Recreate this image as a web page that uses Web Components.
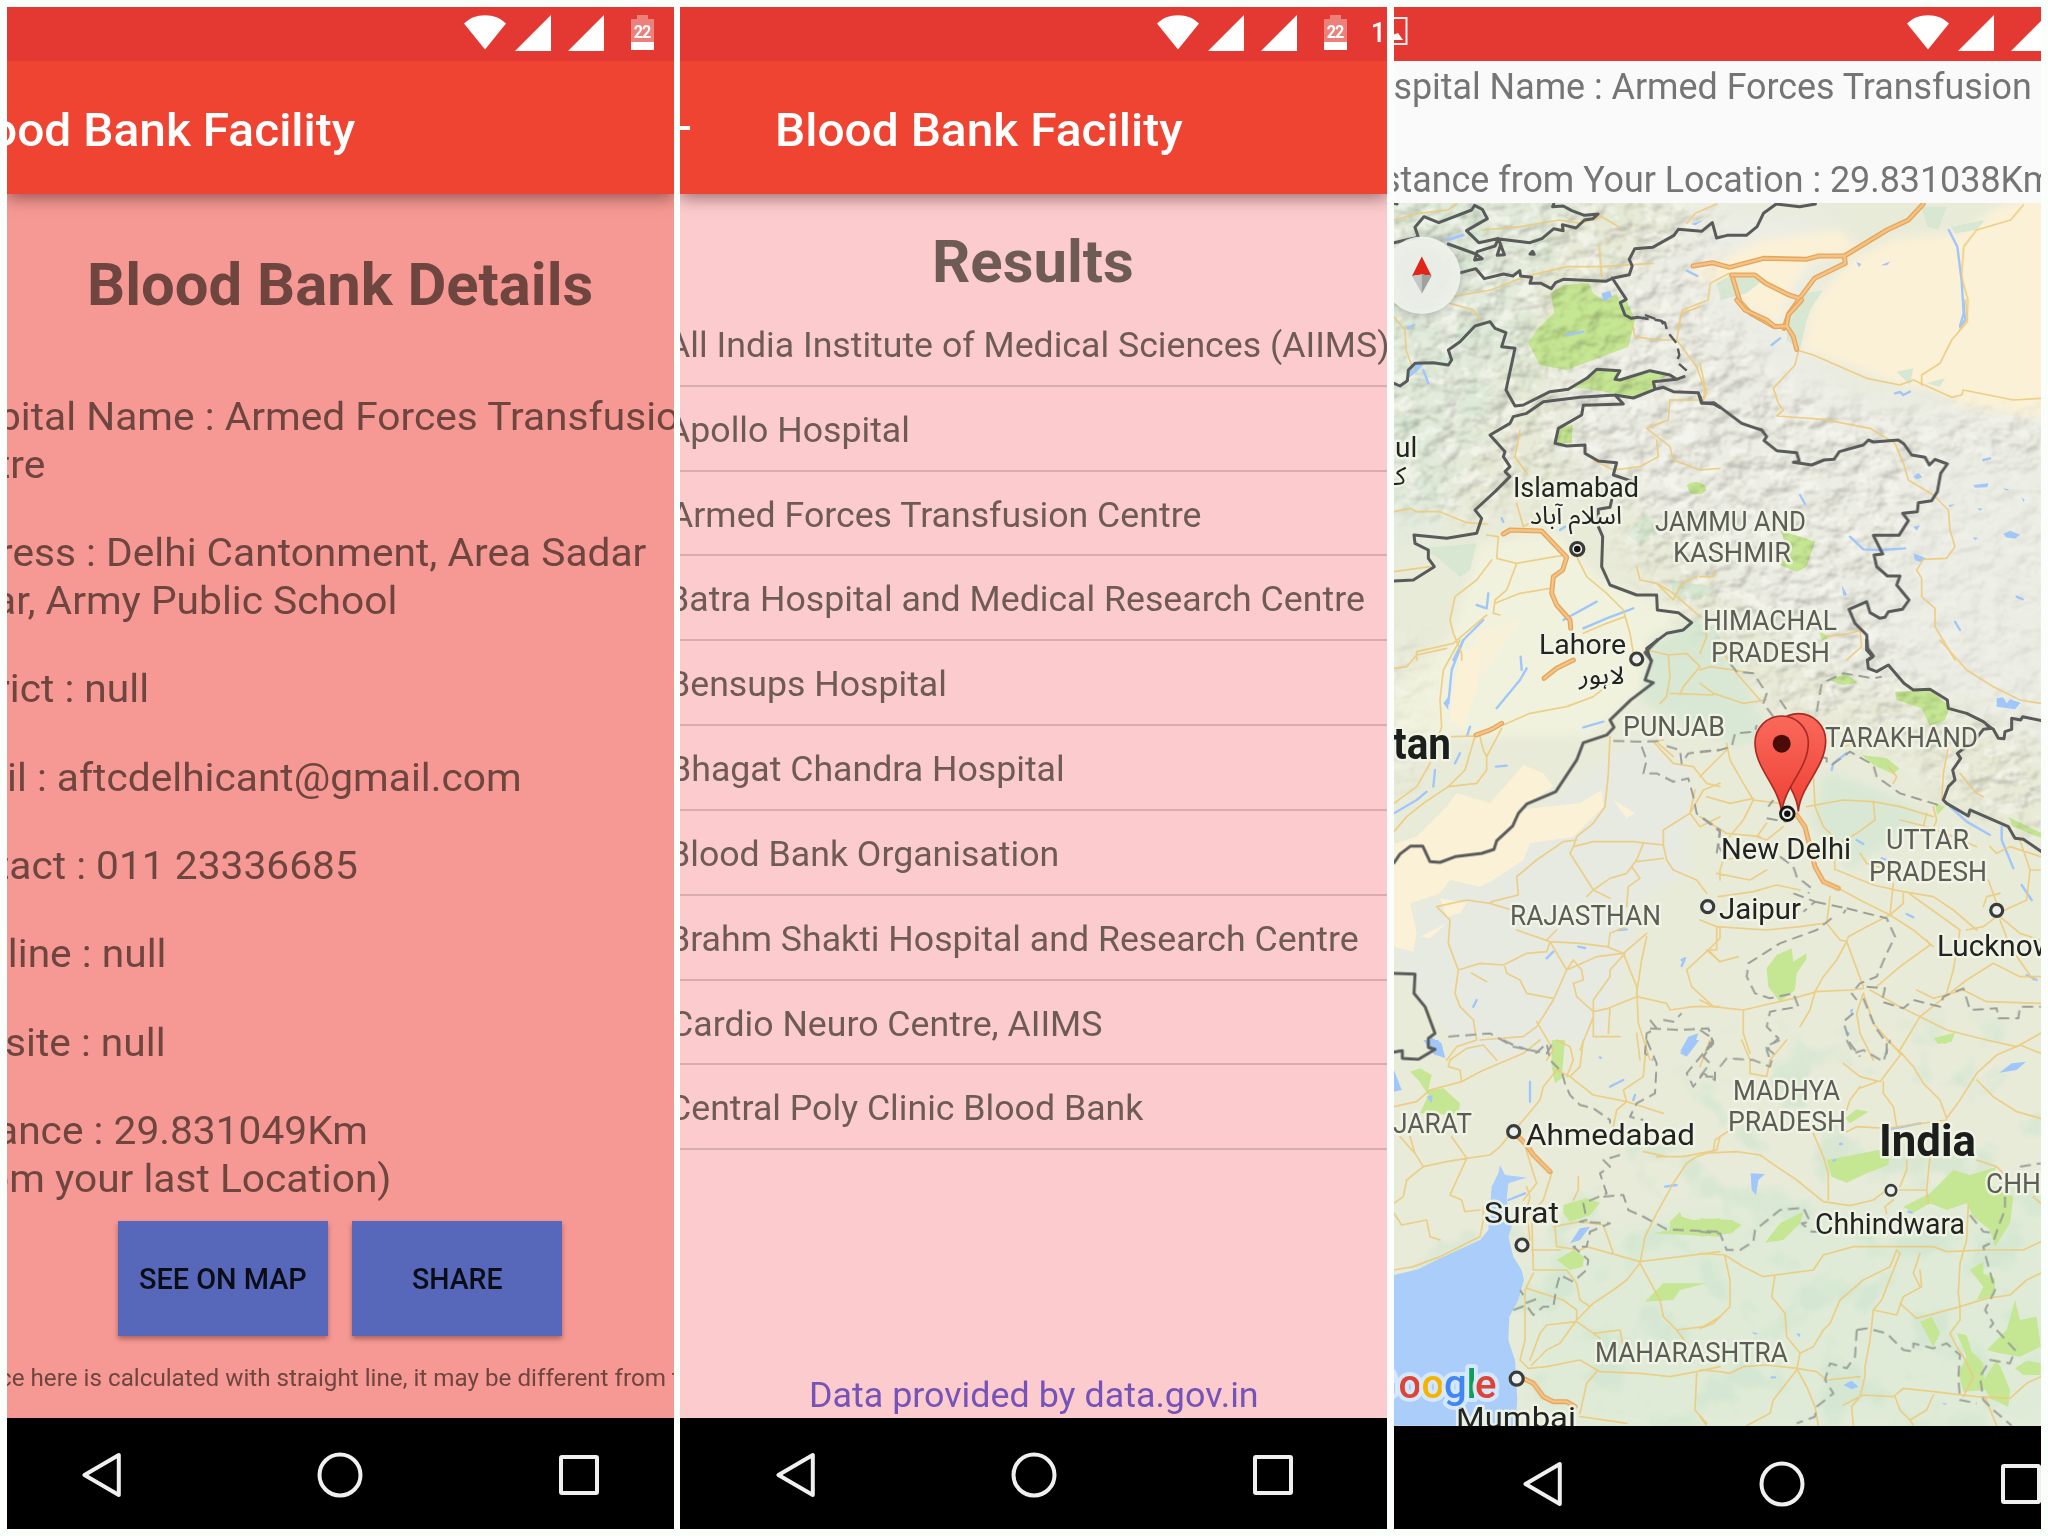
<!DOCTYPE html>
<html lang="en">
<head>
<meta charset="utf-8">
<title>Blood Bank Facility</title>
<style>
html,body{margin:0;height:100%;background:#fafffc;overflow:hidden}
body{font-family:Roboto,"Noto Sans",sans-serif;font-kerning:normal}
</style>
</head>
<body>
<screen-collage></screen-collage>

<template id="map-tpl">
<style>
:host{display:block;overflow:hidden;min-height:0}
svg{display:block;width:647px;height:1223px}
.n *{vector-effect:non-scaling-stroke}
.b path,.s path,.r path,.h path,.wl path{fill:none;stroke-linejoin:round;stroke-linecap:round}
.b path{stroke:#585b5a;stroke-width:3}
.s path{stroke:#9b9f98;stroke-width:2;stroke-dasharray:11 6;stroke-linecap:butt}
.r path{stroke:#ecca7c;stroke-width:1.7}
.h path{stroke:#e3a65c;stroke-width:5}
.h path+path{stroke:#f7c283;stroke-width:2.4}
.g path{fill:#c5e693}
.w path{fill:#a1c6fa}
.wl path{stroke:#a1c6fa;stroke-width:2.4}
.d path{fill:#fbf1d7}
.e path{fill:#d7e7d2}
text{font-family:Roboto,"Noto Sans Arabic","DejaVu Sans",sans-serif;paint-order:stroke;stroke:#f1f4e6;stroke-width:5px;stroke-opacity:.85;stroke-linejoin:round}
.city text{font-size:30px;fill:#222422}
.st text{font-size:28px;fill:#5c5e56}
.co text{font-size:45px;font-weight:700;fill:#1c1e1c}
.goo text{font:500 40px Roboto,sans-serif;stroke:#dcebfb;stroke-width:8px}
.dot circle{fill:#eef0ee;stroke:#3a3c3a;stroke-width:3.2}
</style>
<svg viewBox="1394 203 647 1223">
<defs>
<filter id="relief" x="0" y="0" width="100%" height="100%" color-interpolation-filters="sRGB">
<feTurbulence type="fractalNoise" baseFrequency=".042 .06" numOctaves="4" seed="11"/>
<feDiffuseLighting surfaceScale="7" diffuseConstant="1.16" lighting-color="#fffcf0"><feDistantLight azimuth="225" elevation="60"/></feDiffuseLighting>
<feGaussianBlur stdDeviation=".9"/>
</filter>
<filter id="snow" x="0" y="0" width="100%" height="100%" color-interpolation-filters="sRGB">
<feTurbulence type="fractalNoise" baseFrequency=".05 .07" numOctaves="3" seed="23"/>
<feColorMatrix values="0 0 0 0 .98  0 0 0 0 .98  0 0 0 0 .96  7 0 0 0 -3.6"/>
</filter>
<filter id="patches" x="0" y="0" width="100%" height="100%" color-interpolation-filters="sRGB">
<feTurbulence type="fractalNoise" baseFrequency=".022" numOctaves="3" seed="5"/>
<feColorMatrix values="0 0 0 0 .81  0 0 0 0 .90  0 0 0 0 .81  6 0 0 0 -3.1"/>
</filter>
<filter id="soft" x="-20%" y="-20%" width="140%" height="140%"><feGaussianBlur stdDeviation="16"/></filter>
<filter id="soft2"><feGaussianBlur stdDeviation="5"/></filter>
<linearGradient id="pin" x1="0" y1="0" x2="0" y2="1"><stop offset="0" stop-color="#f9695b"/><stop offset="1" stop-color="#ee4135"/></linearGradient>
<mask id="mtn" maskUnits="userSpaceOnUse" x="1394" y="203" width="647" height="1223">
<g filter="url(#soft)">
<path fill="#fff" d="M1370 190L1680 190 1720 230 1690 290 1740 330 1780 385 1870 415 2070 420 2070 455 1930 450 1900 500 1880 620 1900 660 1960 720 2070 760 2070 850 1960 800 1900 745 1800 720 1730 640 1640 570 1600 480 1520 500 1470 520 1370 500Z"/>
<path fill="#555" d="M1900 480L2070 450 2070 760 1970 700 1900 650Z"/>
<path fill="#777" d="M1370 640L1425 640 1415 790 1370 790Z"/>
</g></mask>
<mask id="plain" maskUnits="userSpaceOnUse" x="1394" y="203" width="647" height="1223">
<path fill="#fff" filter="url(#soft)" d="M1370 1240L1560 1200 1720 1040 2060 1010 2060 1450 1370 1450Z"/>
<path fill="#999" filter="url(#soft)" d="M1370 190L1640 190 1600 300 1560 460 1370 520Z"/></mask>
</defs>
<rect x="1394" y="203" width="647" height="1223" fill="#e9ebd9"/>
<path fill="#ecede5" filter="url(#soft)" d="M1560 330L1700 200 1830 220 1800 330 1850 390 2060 400 2060 760 1960 700 1850 690 1740 600 1630 500 1560 470Z"/>
<path fill="#e2ebdd" filter="url(#soft)" d="M1380 190L1590 190 1540 250 1500 400 1430 540 1380 560Z"/>
<path fill="#f1f2dd" filter="url(#soft2)" d="M1480 545L1555 530 1600 580 1690 615 1650 640 1645 690 1590 735 1394 738 1394 690 1450 640Z"/>
<path fill="#fbf1d7" filter="url(#soft2)" d="M2060 190L2000 205 1965 232 1890 240 1850 262 1815 300 1802 350 1840 362 1900 385 1935 388 1960 405 2060 420Z"/>
<path fill="#fbf1d7" filter="url(#soft2)" d="M1680 280L1760 240 1840 230 1860 250 1810 262 1790 290 1780 325 1745 305 1725 280Z"/>
<path fill="#e7eae1" filter="url(#soft2)" d="M1560 790L1640 740 1690 770 1690 870 1640 900 1600 1040 1470 1060 1394 960 1400 920 1500 860Z"/>
<path fill="#d9e8d4" filter="url(#soft2)" d="M1650 640L1700 620 1750 690 1770 740 1730 745 1660 712 1640 700ZM1825 770L1880 790 1930 815 1850 870 1810 820Z"/>
<path fill="#e0ebd7" filter="url(#soft)" d="M1520 1250L1700 1200 2060 1190 2060 1440 1520 1440Z"/>
<g mask="url(#plain)" opacity=".6"><rect x="1394" y="203" width="647" height="1223" filter="url(#patches)"/></g>
<g class="n d" transform="translate(1380 640) scale(.33333)">
<path d="M42 612L110 590 200 500 230 460 330 490 430 375 490 400 520 440 410 510 600 490 665 450 670 500 580 590 450 610 430 660 340 720 300 740 210 720 180 760 90 790 110 880 100 935 42 920Z"/>
<path d="M240 40L300 20 290 150 250 260 210 240ZM700 480L765 520 740 535ZM120 890L200 850 150 895ZM180 775L260 790 240 820 200 830Z"/></g>
<path fill="#fbf1d7" opacity=".7" d="M1480 630L1520 620 1500 650 1470 690 1450 700Z"/>
<g class="n e" transform="translate(1380 300) scale(.33333)">
<path d="M120 745L290 730 270 810 240 830 170 770ZM850 1040L960 940 1020 1010 1020 1080 830 1080ZM800 640L830 700 780 740 740 700ZM870 840L1000 860 960 900 880 890Z"/></g>
<g class="n e" transform="translate(1700 300) scale(.33333)"><path d="M290 30L340 5 320 60 300 150 260 120 265 70ZM590 215L640 205 630 255ZM680 250L735 235 720 260Z"/></g>
<g class="n e" transform="translate(1380) scale(.42606 .33333)"><path d="M790 850L830 820 900 840 860 880 800 900ZM1270 620L1330 620 1310 690 1285 680ZM1340 680L1420 660 1400 690 1350 700ZM1000 880L1040 870 980 985 950 985Z"/></g>

<g mask="url(#mtn)" opacity=".55"><rect x="1394" y="203" width="647" height="700" filter="url(#snow)"/></g>

<g class="n g" transform="translate(1380) scale(.42606 .33333)"><path d="M400 880L430 855 490 848 500 880 530 905 555 880 570 930 600 990 380 990 410 940Z"/></g>
<g class="n g" transform="translate(1380 300) scale(.33333)">
<path d="M560 0L740 0 765 60 745 140 680 165 560 210 480 195 445 130 470 90Z"/>
<path d="M570 265L620 235 650 208 720 212 705 238 810 212 870 225 830 240 825 270 760 294 700 280 610 265Z"/>
<path d="M530 385L578 375 575 430 530 430ZM920 555Q950 535 978 560 970 590 930 580Z"/></g>
<g class="n g" transform="translate(1700 300) scale(.33333)"><path d="M240 690L345 725 320 800 290 815 240 795 270 760ZM0 545L20 570 0 585ZM355 990L385 1010 370 1030Z"/></g>
<g class="n g" transform="translate(1700 640) scale(.33333)">
<path d="M585 155L690 150 750 200 735 240 690 258 665 205 590 180ZM385 120L440 100 472 128 430 135ZM485 345L560 355 598 385 580 402 520 375ZM705 490L735 500 712 525ZM925 530L1025 580 1025 595 940 560Z"/>
<path d="M200 985L230 945 275 925 280 965 320 940 318 960 290 1000 285 1050 240 1085 205 1040ZM700 1195L765 1178 755 1205 715 1212ZM365 0L380 0 370 8Z"/></g>

<g mask="url(#mtn)" style="mix-blend-mode:multiply" opacity=".3"><rect x="1394" y="203" width="647" height="700" filter="url(#relief)"/></g>

<g class="n g" transform="translate(1380 1040) scale(.33333)">
<path d="M90 95L120 85 155 105 145 150 190 145 240 190 235 225 120 220 145 165 115 120ZM515 0L555 0 550 60 545 115 525 130 515 80ZM550 495L620 475 660 488 630 525 570 545 550 520ZM530 660L580 630 612 650 608 680 570 690ZM820 580L870 570 870 545 900 515 905 530 940 540 1020 535 1020 590ZM795 785L850 730 980 730 900 750 880 780Z"/></g>
<g class="n g" transform="translate(1700 1040) scale(.33333)">
<path d="M0 535L95 540 125 555 95 580 0 590ZM195 608L240 550 310 515 300 550 250 600ZM380 360L460 345 535 330 570 340 565 375 500 400 440 428 395 410ZM435 235L470 208 505 215 450 250Z"/>
<path d="M610 500L690 460 760 390 810 405 890 380 860 430 940 470 930 550 885 620 870 570 820 530 800 490 740 510 690 490 640 518ZM810 690L850 665 850 700 885 715 885 765 830 780 850 740ZM770 880L800 885 815 935 850 970 855 1050 790 1055 775 1000 800 950ZM860 930L920 870 945 780 960 840 1010 830 1022 920 960 950 900 940ZM845 1030L890 960 910 1000 930 1050 925 1100 870 1075ZM945 985L980 962 1022 970 1022 1005 970 1005ZM660 845L695 830 720 880 700 920ZM705 0L755 0 735 12Z"/></g>

<g class="n w" transform="translate(1380 1040) scale(.33333)"><path d="M42 705L115 688 180 655 230 632 300 600 325 570 335 440 355 400 360 375 375 405 440 413 385 430 380 480 395 560 385 590 400 650 425 690 432 720 415 780 388 830 385 900 405 960 412 1080 405 1157 42 1157Z" style="fill:#aacdfa"/>
<path d="M42 90L65 150 42 155ZM130 0L175 0 195 50 165 45 150 30ZM570 610L600 565 630 560 600 600ZM900 40L940 0 958 0 920 50ZM140 170L158 165 155 190Z"/></g>
<g class="n w" transform="translate(1380 640) scale(.33333)"><path d="M150 1190L185 1210 195 1255 160 1240ZM900 1235L925 1190 955 1180 940 1225ZM190 190L205 170 205 210Z"/></g>
<g class="n w" transform="translate(1700 300) scale(.33333)"><path d="M640 530L655 518 667 532 650 538ZM820 555L865 550 862 562 825 563ZM910 702L930 692 960 704 945 716 918 712ZM640 760L678 775 660 786 645 780ZM640 680L660 676 650 692ZM425 855L442 885 430 888ZM745 615L765 613 750 622ZM818 712L835 714 825 720ZM908 565L928 568 920 572ZM832 624L848 626 840 633ZM965 592L974 600 970 606Z"/></g>
<g class="n w" transform="translate(1700 640) scale(.33333)"><path d="M890 175L910 172 920 190 930 178 962 188 945 208 890 200ZM450 1110L460 1105 455 1130ZM438 1170L450 1180 442 1192Z"/></g>
<g class="n w" transform="translate(1700 1040) scale(.33333)"><path d="M152 400L195 402 175 420 168 465 155 450ZM898 98L935 70 978 65 950 90ZM430 1035L455 1022 475 1040 455 1048ZM288 880L302 882 298 892ZM725 1090L742 1090 735 1095ZM155 876L175 880 165 884Z"/></g>
<g class="n w" transform="translate(1380) scale(.42606 .33333)"><path d="M520 880L540 872 545 890 525 905ZM145 720L195 700 200 708 165 722ZM730 672L760 660 740 676ZM1118 786L1130 792 1124 802ZM1175 796L1198 784 1190 796Z"/></g>
<g class="n w" transform="translate(1380 300) scale(.33333)"><path d="M85 215L110 190 130 195 110 215 85 235Z"/></g>

<g class="n wl" transform="translate(1380 300) scale(.33333)"><path d="M550 960L650 905M290 915L320 925 325 880M220 1080L250 1020 310 960M610 985L680 955 760 925M130 210L145 250M560 105L610 95M365 655L370 665M540 690L555 680"/></g>
<g class="n wl" transform="translate(1380 640) scale(.33333)"><path d="M250 0L215 90 205 190M440 85L420 120 350 205M422 50L425 90M610 262L670 245M42 520L110 480 140 455M165 390L160 440M240 340L225 370M270 260L262 285M348 380L380 377M905 960L915 955 905 978M280 1100L290 1080M500 955L520 935M715 870L740 868M595 920L615 924"/></g>
<g class="n wl" transform="translate(1700 640) scale(.33333)"><path d="M750 500L800 545 870 585M905 560L905 600 940 685M395 390L400 370 440 340M965 735L995 780M470 600L490 612M545 655L600 675M620 822L640 832M980 1005L1010 1020"/></g>
<g class="n wl" transform="translate(1700 300) scale(.33333)"><path d="M450 710L490 748 545 750 615 745M300 585L315 612M790 0L795 60 780 80M585 280L600 276 610 285 630 275M215 135L240 115M850 480L870 475M950 890L968 898M765 965L780 990"/></g>
<g class="n wl" transform="translate(1380) scale(.42606 .33333)"><path d="M1335 690L1355 740 1365 840 1370 940 1362 975M720 812L745 828M65 985L80 975"/></g>
<g class="n wl" transform="translate(1380 1040) scale(.33333)"><path d="M450 125L450 185M690 140L730 120M760 180L765 165M855 440L890 435M385 480L435 460M660 52L662 54"/></g>
<g class="n wl" transform="translate(1700 1040) scale(.33333)"><path d="M545 272L600 262 660 250M400 362L405 360M420 312L425 312M215 1012L225 1012M625 515L635 518"/></g>

<g class="n r" opacity=".88">
<g transform="translate(1380) scale(.42606 .33333)"><path d="M33 660L90 640 160 630 180 612M240 690L330 680 420 660 470 670 520 650 560 680M170 890L260 870 340 830 440 800 520 800 640 790M515 740L520 830M820 820L775 850 770 900 710 930 700 985M720 670L740 640 790 612M1510 615L1480 660 1400 690 1370 740 1365 830 1380 900 1378 960 1360 990"/></g>
<g transform="translate(1380 300) scale(.33333)"><path d="M42 50L75 90 78 150 100 210M210 10L280 30 300 60M420 390L405 470 440 520M42 635L90 625 110 635 180 635 260 668 320 672M320 705L355 710 350 775 410 790 525 770 560 765M335 780L290 840 225 890 210 960 220 1000 245 1060 245 1080M410 790L380 870 345 900 340 940 360 945M345 910L420 880 510 865M42 815L150 800M590 770L620 830 680 880 730 930 750 1000 760 1060M320 945L290 970 220 1030 110 1055 110 1080M410 610L430 680 480 650 530 640M610 1000L680 970 735 950M830 850L880 880 960 950M770 800L780 840 830 850 880 900 905 850 950 830M755 70L765 110 830 120 890 120M900 60L890 120 950 200 975 270 970 300 870 300 865 360 800 385 870 440 880 480 960 510 1020 505M640 480L700 510 780 500 835 470 830 420M960 20L905 40 895 80"/></g>
<g transform="translate(1700 300) scale(.33333)"><path d="M290 150L340 165 500 235 600 255 640 240 685 260 755 292 785 285 790 270 940 300 1022 295M797 0L802 65 755 120 720 190 665 225 665 255M295 155L285 195 220 265 235 310 250 330 230 348 370 358 510 385 585 430 610 490 625 540 700 585 745 630 750 690 765 740 740 775 670 778 650 810 665 835 665 890 705 925 705 980 765 1080M0 190L20 280 10 300M0 1060L20 1010 10 950M380 1010L450 1000 480 990 485 1040 440 1080M0 830L40 830 45 810"/></g>
<g transform="translate(1380 640) scale(.33333)"><path d="M240 0L190 90 180 180 185 260 150 370 110 440 42 490M42 85L80 80 110 45 200 25M370 255L450 220 560 200 640 170 690 130M365 265L320 350 320 390 290 430 205 440 130 490 80 530 42 575M215 290L285 288 255 390 205 440M300 290L310 330 320 350M690 290L685 400 675 500 640 550 590 590 580 620 640 605 760 605 850 615 850 570 930 520 970 450 1020 430M590 600L550 605 470 660 410 710 415 765 335 785 330 790M170 800L260 780 330 790 395 810M170 800L210 840 205 910 235 990 225 1060 240 1100 280 1140 290 1200 230 1220 200 1260M235 990L300 970 370 975 440 940 500 935 510 905 410 870M580 620L570 640 640 750 620 770M640 750L690 715 740 700 770 660 790 610M690 775L640 750M850 615L860 660 880 690 950 720 980 760M770 665L850 655M755 680L780 715 745 740 740 800M510 905L560 990 650 950 730 940 800 880M510 905L600 910 680 920 730 940M500 900L530 870M730 940L770 1040 775 1150 810 1260M800 890L785 960 770 1060M735 940L690 990 690 1010 640 1080 640 1130 640 1190M560 990L520 1080 470 1160 430 1190 300 1200M375 980L380 1000 420 1020 440 1060 520 1075M560 990L580 960 605 990 610 1020 580 1030 590 1070 640 1115 685 1105 770 1070 860 1090 870 1110 940 1100 1020 1100M690 1105L685 1180M640 1190L720 1190M740 860L690 880 685 920M275 1000L320 1025M920 990L985 930 1020 895 1020 860M985 930L1020 965M920 990L935 1040 1000 1100M850 300L820 305 880 370 940 380 980 430 1020 440M945 450L930 520 960 560 1020 530M800 30L865 45 870 110 860 170 840 190M865 45L920 40 960 80 910 140 900 165M870 160L1000 165M835 310L880 350M470 1145L520 1230 500 1260M640 1130L600 1230M770 1180L780 1260"/></g>
<g transform="translate(1700 640) scale(.33333)"><path d="M0 130L40 160 100 180 130 190 200 180M0 90L30 80 100 90 160 100M60 20L110 100 180 180M80 310L90 360 130 430 160 480 240 490M80 330L50 360 0 410M20 470L90 490 160 475M0 530L80 580 180 590M160 480L130 540 80 600M320 500L430 480 520 485 600 500 700 530M520 485L525 540 470 580 400 620M340 400L345 500 370 560 400 590 405 690M680 520L670 560M700 500L710 540 690 590M415 745L480 780 570 825 640 870 700 920M610 760L610 790 570 825 500 860 445 890 440 905 490 1040M390 770L380 850 420 900 440 905 410 960 370 1010 345 1055 330 1110 300 1160M345 1055L450 1050 490 1045M0 840L50 860 200 870 300 860 370 850M55 770L160 755 230 735 300 750M50 700L150 720 200 690M50 860L50 930 20 930 60 965 115 950M410 690L520 735 610 755 700 770 760 810 830 870M865 720L890 790M620 755L780 870 760 990 740 1060M915 810L980 780 990 690 960 600M1020 690L990 690M890 830L850 860 800 870M900 830L960 880 1022 900M900 840L930 920 1000 1020M880 970L800 1020 660 1130 600 1230M880 970L960 1010 1022 1010M650 1050L700 1075 790 1050 860 1085 1022 1090M510 1050L600 1100 680 1140 740 1170 860 1200 950 1220 1022 1180M680 900L690 915 600 980 530 1040M490 1060L520 1150 600 1240M490 1060L470 1120 480 1180 500 1220 520 1260M0 1080L40 1100 130 1110 280 1075 350 1055M130 1110L130 1180 150 1240M720 0L800 90 880 140 960 180 1022 190M745 320L730 400 725 480M780 400L830 460 850 470M870 620L890 640 930 620 1022 650M60 720L60 690 70 660 130 650M250 560L200 600 170 590 200 550M430 320L480 300 500 310M565 380L590 410 580 430M850 800L860 770 900 760M600 540L680 560 760 590 830 620M480 640L500 670 600 700M580 730L570 825"/></g>
<g transform="translate(1380 1040) scale(.33333)"><path d="M42 200L110 185 150 150 245 125 300 95 370 65 430 40 480 0M245 125L240 90 205 80 210 60 260 25 310 15 350 60M90 290L105 340 130 380 200 365 260 355 330 345 360 320 385 290 430 240 480 180 490 140 530 90M215 290L260 355 235 410 210 465 245 480 255 515 300 510M42 490L70 470 80 420 130 380M42 520L65 555 140 540 150 590 180 600M42 690L100 680 180 650 260 610 300 590 310 540 310 500M430 300L460 400 470 430 430 480M515 400L490 480 455 520 460 690M440 440L450 470 440 510 450 600M525 560L530 620 600 630 620 620 780 665 900 650 1020 635M455 630L540 630M460 690L560 690 590 730 600 780 630 800M460 700L435 750 435 900 420 960M450 960L480 880 500 855 590 845 640 880 660 895M455 975L500 930 540 910 590 840 590 810 550 780 440 745M590 840L640 790 700 750 740 720 780 670 795 590 830 520 880 430 920 370 950 350 1010 330 1020 290M780 670L840 780 850 830 890 870 920 910M640 880L720 870 730 920M890 870L970 860 1020 830M420 960L445 985 500 980 600 960 660 995 780 1000 870 1010 950 995 1020 980M650 995L620 1030 600 1120M950 1000L945 1110 980 1150M600 1130L640 1135 740 1150M530 90L570 110 600 80 610 0M570 110L640 165 740 185 850 220M740 185L710 210 700 260M740 185L730 150 790 110 800 0M530 0L570 20 580 60 560 110M520 560L600 545 670 555 700 640M595 410L595 450 580 480M830 350L910 350 1010 330M790 335L860 350M105 340L60 290"/></g>
<g transform="translate(1700 1040) scale(.33333)"><path d="M0 340L110 335 180 345 230 380 290 420 370 485 450 497 520 480 560 450M340 280L370 350 385 400 385 480M0 640L75 645 130 680 190 710 340 690 370 645 460 620 600 620 700 620 740 635 860 630 970 630 1022 605M75 650L90 720 90 800 40 850 0 865M225 705L215 770 255 820 260 890 300 940 290 990 220 1080 210 1120 140 1157M300 940L340 920 370 870 390 850 420 780 490 720 570 680 590 630M590 630L600 640 545 780 520 810 510 900 495 980 495 1010 480 1070 455 1100 460 1157M520 810L590 825 610 770 665 740 660 690M600 790L650 835 780 800 860 775 930 765 980 720 1022 700M805 495L800 600 780 670 775 760 780 800 780 840 750 880 770 920 790 950 820 1010 790 1070M290 985L350 995 380 1020 480 1010M0 990L60 995 90 1000 130 980 200 975 290 985 320 1040 345 1100 355 1157M430 1095L490 1065 580 1070 610 1045 700 1055 830 1070 930 1075 980 1030 1022 1010M585 1070L600 1110 630 1140 680 1110 700 1065M0 80L30 0M150 100L200 110 210 60 260 0M40 335L45 300 90 270M430 70L480 110 540 125 605 40 560 0M605 40L640 80 670 130 720 180 740 235 780 180 830 100 890 45 960 15 1022 40M830 120L880 170 950 215 1022 235M550 125L550 160 580 200 590 260M480 140L450 180 440 210M530 125L480 145M440 275L470 260 560 265 740 240M620 360L620 390 600 440M690 350L680 450 685 490M600 450L680 450M560 520L555 500 580 480M0 1130L20 1157M855 1070L890 1157M830 360L890 380 910 400M1000 470L1022 490M630 1140L640 1157M125 0L150 60 150 100M660 640L640 700 660 740"/></g>
</g>

<g class="n h" transform="translate(1380) scale(.42606 .33333)"><g><path d="M1275 612L1240 660 1190 690 1090 768 1030 768 1000 778 900 775 820 802 780 788 735 798M1090 768L1092 790 1020 835 985 895 960 940 948 985M825 825L880 825 905 850 960 885 985 895M828 835L845 905 870 940 925 980"/><path d="M1275 612L1240 660 1190 690 1090 768 1030 768 1000 778 900 775 820 802 780 788 735 798M1090 768L1092 790 1020 835 985 895 960 940 948 985M825 825L880 825 905 850 960 885 985 895M828 835L845 905 870 940 925 980"/></g></g>
<g class="n h" transform="translate(1700 300) scale(.33333)"><g><path d="M110 0L135 30 200 60 225 80 260 78 280 110 290 148M260 75L265 45 305 0"/><path d="M110 0L135 30 200 60 225 80 260 78 280 110 290 148M260 75L265 45 305 0"/></g></g>
<g class="n h" transform="translate(1380 300) scale(.33333)"><g><path d="M370 702L390 690 485 693 530 740 560 772 548 810 520 830 515 880 530 915 570 960 572 985"/><path d="M370 702L390 690 485 693 530 740 560 772 548 810 520 830 515 880 530 915 570 960 572 985"/></g></g>
<g class="n h" transform="translate(1380 640) scale(.33333)"><g><path d="M492 115L530 85 580 60M288 285L325 272 340 265 365 250"/><path d="M492 115L530 85 580 60M288 285L325 272 340 265 365 250"/></g></g>
<g class="n h" transform="translate(1700 640) scale(.33333)"><g><path d="M290 525L315 560 325 600 345 680 370 725 415 745"/><path d="M290 525L315 560 325 600 345 680 370 725 415 745"/></g></g>
<g class="n h" transform="translate(1380 1040) scale(.33333)"><g><path d="M415 290L440 315 460 345 510 395M435 1018L460 1030 490 1070 520 1085 560 1085 585 1100"/><path d="M415 290L440 315 460 345 510 395M435 1018L460 1030 490 1070 520 1085 560 1085 585 1100"/></g></g>

<g class="n s">
<g transform="translate(1380) scale(.42606 .33333)"><path style="stroke:#585b5a;stroke-width:2.6" d="M605 952L660 962 672 985"/></g>
<g transform="translate(1380 300) scale(.33333)"><path style="stroke:#585b5a;stroke-width:2.4" d="M795 45L855 68 862 95 890 130 898 165 890 185 920 212"/></g>
<g transform="translate(1380 640) scale(.33333)"><path d="M700 303L780 305 850 303M860 318L900 330 905 370 925 340 1020 330M785 320L800 360 790 400 830 400 880 425 925 415 940 470 950 520 1020 575 1010 640M205 1190L330 1180 400 1220 500 1240 515 1215M810 1140L830 1165 800 1180 795 1240 820 1260M850 1140L880 1145 905 1120M810 1165L900 1170 985 1165 1000 1210 970 1250"/></g>
<g transform="translate(1700 640) scale(.33333)"><path d="M90 70L110 95 160 100 200 160 190 190 220 230M240 180L260 210M350 215L365 130 430 100 520 115 545 110M0 335L60 330 95 320 105 280 165 275 170 255M360 350L380 355 380 370M395 375L450 335 520 375 530 410 600 460 725 498M10 535L60 570 55 620 70 640M205 500L220 480M200 535L260 545M240 650L280 680 290 710 335 745 325 760M280 760L345 785 310 815M345 785L440 805 430 820M395 835L350 870 240 910 145 970 140 1010 165 1060 210 1075 280 1060 295 1100 210 1115 200 1160 235 1195 200 1230 210 1260M440 805L560 835 585 890 560 940 530 1010 480 1030 455 1060 470 1080M500 1040L555 1045 545 1085 610 1105 640 1080 720 1100 730 1070 790 1045 810 1110 890 1105 895 1135 955 1135 960 1100 1022 1100M490 1075L525 1160 560 1210 560 1260M460 1120L430 1145 450 1210 480 1250M0 1170L30 1190 30 1220 10 1240"/></g>
<g transform="translate(1380 1040) scale(.33333)"><path d="M370 0L400 15 470 38 500 10 510 60 545 95 555 130 570 165 600 195 640 205 690 240 690 250M800 0L830 70 825 160 770 190 750 230 790 240M720 345L670 360 690 380 660 400 680 460 610 490 620 540 600 545 690 550 630 575 620 620 580 620 625 660 620 690 580 725 540 705 530 740 520 800 490 800 460 825 435 790 475 775M400 810L440 795M420 750L430 765M670 470L730 465 745 510 790 530 860 568 1020 575M1000 0L970 40 920 100 940 140 970 100 1005 120 1005 90"/></g>
<g transform="translate(1700 1040) scale(.33333)"><path d="M0 575L60 580 80 630 120 630 160 605 165 570 240 510 310 503 330 545 305 550 335 575 360 575M40 0L10 50 30 70 0 110 40 110M60 80L80 55 160 60 210 80 220 40 195 20 240 0M440 0L460 40 490 30 550 65 570 0M960 380L1022 370M915 470L915 510 895 560 880 605 850 620 860 660 885 750 855 810 880 850 860 875M810 525L850 575 890 580M890 870L945 930 930 970 870 960 840 1010 850 1080 880 1110 935 1157M470 870L500 865 560 880 610 930 640 935 640 910 700 925 740 910 780 945 775 1010 780 1080 830 1090M470 870L465 950 440 985 390 970 375 1020 400 1060 350 1100 345 1130 290 1150"/></g>
</g>

<g class="n b">
<g transform="translate(1380) scale(.42606 .33333)"><path d="M33 728L90 712 82 682 103 650 138 668 215 630 222 616 240 628 252 656 203 692 232 728 275 716 352 728 380 716 408 686 430 692 428 674 460 684 480 660 500 656 512 642 480 646 450 632 430 618 405 620 408 612M160 732L225 762 240 776 222 780 228 755 270 738 278 716 292 764 275 766 283 735M352 762L358 754 362 763ZM190 818L225 806 245 836 290 822 312 828 328 812 330 828 356 832 352 850 378 850 402 866 412 848 430 838 530 844 548 834 585 824 592 798 585 778 598 746 640 742 690 706 700 688 755 694 780 668 790 714 815 706 850 706 860 706 885 680 900 640 930 612 985 620 1022 612M545 834L578 898 564 908 575 945 590 955 605 952M33 610L40 612"/></g>
<g transform="translate(1380 300) scale(.33333)"><path d="M42 250L60 258 82 242 85 210 105 190 160 188 205 195 215 180 205 150 240 125 285 78 330 65 345 85 378 98 365 140 405 145 378 270 405 318 430 315 510 275 565 268 620 235 650 208 720 212 705 238 720 240 810 212 870 225 890 238 912 230M890 238L820 245 825 268 760 294 705 285 730 312 610 316 605 345 535 385 525 430 560 438 615 435 615 460 655 483 710 488 700 525 760 545M705 285L600 292 490 305 440 340 400 350 390 370 330 405 375 455 370 470 390 500 375 515 390 530 345 575 285 630 305 655 290 700 200 715 102 705 105 730 145 750 145 775 163 800 100 840 42 843M825 268L850 262 880 275 955 278 965 308 1000 312 1020 322M695 600L690 622 655 628 655 680 668 710 665 800 690 855 770 885 830 885 832 930 895 938 935 968 910 990 860 1000 800 1045 812 1080"/></g>
<g transform="translate(1700 300) scale(.33333)"><path d="M0 290L5 310 42 308 125 370 160 382 185 390 200 410 192 422 230 452 290 458 298 485 280 487 335 495 372 480 402 478 418 455 490 435 505 420 520 426 595 420 612 432 635 465 675 472 688 495 705 478 742 492 722 520 712 575 695 602 655 608 652 635 608 640 625 662 597 706 520 706 548 762 522 765 530 800 562 828 600 828 590 855 627 900 607 928 565 935 555 952 540 955 510 938 500 905 447 928 465 970 500 1005 503 1045 520 1068 505 1080"/></g>
<g transform="translate(1380 640) scale(.33333)"><path d="M832 0L795 38 815 62 795 120 820 128 752 180 690 240 702 262 680 285 610 308 590 360 527 455 440 492 415 520 398 558 350 602 342 628 305 640 225 650 180 667 150 665 128 618 92 618 60 642 42 668M42 1000L105 1002 102 1060 135 1100 165 1180 145 1195 145 1222 165 1228 115 1258 67 1255 67 1232 42 1236"/></g>
<g transform="translate(1700 640) scale(.33333)"><path d="M500 0L500 30 518 50 502 60 505 85 530 95 565 75 612 130 640 150 690 148 742 180 745 205 800 220 850 245 875 265 850 268 825 300 772 340 782 355 758 390 765 420 745 440 730 480 740 490 805 528 810 510 925 560 945 595 970 598 1025 635M860 255L880 268 895 295 912 296 915 275 935 268 935 235 962 240 968 230 1025 242"/></g>
</g>

<g class="dot">
<circle cx="1577.3" cy="549" r="6.5"/><circle cx="1577.3" cy="549" r="3.300" style="fill:#111;stroke:none"/>
<circle cx="1636.7" cy="659" r="6"/><circle cx="1707.7" cy="906.7" r="6"/><circle cx="1996.7" cy="910.3" r="6"/><circle cx="1513.7" cy="1131.7" r="6"/><circle cx="1522" cy="1245" r="6"/><circle cx="1891" cy="1190.3" r="5.2" style="stroke-width:2.6"/><circle cx="1516.7" cy="1378.7" r="6.5"/>
</g>
<g class="st">
<text x="1655" y="530.7" textLength="151" lengthAdjust="spacingAndGlyphs">JAMMU AND</text>
<text x="1673" y="561.7" textLength="118" lengthAdjust="spacingAndGlyphs">KASHMIR</text>
<text x="1703" y="630" textLength="134" lengthAdjust="spacingAndGlyphs">HIMACHAL</text>
<text x="1711" y="661.7" textLength="119" lengthAdjust="spacingAndGlyphs">PRADESH</text>
<text x="1623" y="735.7" textLength="102" lengthAdjust="spacingAndGlyphs">PUNJAB</text>
<text x="1825" y="747.3" textLength="153" lengthAdjust="spacingAndGlyphs">TARAKHAND</text>
<text x="1886" y="849.3" textLength="83" lengthAdjust="spacingAndGlyphs">UTTAR</text>
<text x="1869" y="880.7" textLength="118" lengthAdjust="spacingAndGlyphs">PRADESH</text>
<text x="1510" y="925" textLength="151" lengthAdjust="spacingAndGlyphs">RAJASTHAN</text>
<text x="1733" y="1100" textLength="107" lengthAdjust="spacingAndGlyphs">MADHYA</text>
<text x="1728" y="1130.7" textLength="118" lengthAdjust="spacingAndGlyphs">PRADESH</text>
<text x="1986" y="1193.3" textLength="55" lengthAdjust="spacingAndGlyphs">CHH</text>
<text x="1393" y="1133.3" textLength="79" lengthAdjust="spacingAndGlyphs">JARAT</text>
<text x="1595" y="1361.7" textLength="193" lengthAdjust="spacingAndGlyphs">MAHARASHTRA</text>
</g>
<g class="city">
<text x="1513" y="497" textLength="126" lengthAdjust="spacingAndGlyphs" style="font-size:28px">Islamabad</text>
<text x="1530" y="524" textLength="92" lengthAdjust="spacingAndGlyphs" style="font-size:25px">اسلام آباد</text>
<text x="1395" y="457" style="font-size:28px">ul</text>
<text x="1384" y="484" style="font-size:25px">ک</text>
<text x="1539" y="654" textLength="87" lengthAdjust="spacingAndGlyphs" style="font-size:28px">Lahore</text>
<text x="1579" y="684" textLength="46" lengthAdjust="spacingAndGlyphs" style="font-size:25px">لاہور</text>
<text x="1721" y="859" textLength="130" lengthAdjust="spacingAndGlyphs">New Delhi</text>
<text x="1719" y="919" textLength="82" lengthAdjust="spacingAndGlyphs">Jaipur</text>
<text x="1937" y="955.7" textLength="118" lengthAdjust="spacingAndGlyphs">Lucknow</text>
<text x="1526" y="1144.500" textLength="169" lengthAdjust="spacingAndGlyphs">Ahmedabad</text>
<text x="1484" y="1223" textLength="75" lengthAdjust="spacingAndGlyphs">Surat</text>
<text x="1815" y="1234" textLength="150" lengthAdjust="spacingAndGlyphs">Chhindwara</text>
<text x="1456" y="1428" textLength="120" lengthAdjust="spacingAndGlyphs">Mumbai</text>
</g>
<g class="co">
<text x="1393" y="759" textLength="58" lengthAdjust="spacingAndGlyphs">tan</text>
<text x="1879" y="1156.2" textLength="97" lengthAdjust="spacingAndGlyphs">India</text>
</g>
<g class="goo"><text y="1397.500"><tspan x="1369.500" fill="#4285f4">G</tspan><tspan x="1398.5" fill="#db4437">o</tspan><tspan x="1421.5" fill="#f4b400">o</tspan><tspan x="1444" fill="#4285f4">g</tspan><tspan x="1466.5" fill="#0f9d58">l</tspan><tspan x="1475" fill="#db4437">e</tspan></text></g>
<g transform="translate(1700 640) scale(.33333)" style="stroke:#a82a22;stroke-width:5">
<path fill="url(#pin)" d="M295 514C290 440 215 382 215 302A81 81 0 0 1 377 302C377 382 300 440 295 514Z"/>
<path fill="url(#pin)" d="M245 520C240 442 165 387 165 308A80 80 0 0 1 325 308C325 387 250 442 245 520Z"/>
<circle cx="245" cy="311" r="27" style="fill:#4b0c08;stroke:none"/>
</g>
<circle cx="1787.3" cy="813.7" r="6.8" fill="#eef0ee" stroke="#161616" stroke-width="2.8"/><circle cx="1787.3" cy="813.7" r="3.2" fill="#111"/>
<circle cx="1421.8" cy="276.5" r="39" fill="#777" opacity=".5" filter="url(#soft2)"/>
<circle cx="1421.8" cy="275.3" r="38.7" fill="#f1f5ee" opacity=".9"/>
<path fill="#e0251b" d="M1421.8 256.5L1431.5 276 1421.8 274.5 1412 276Z"/><path fill="#c4c8c4" d="M1412 276L1421.8 274.5 1431.5 276 1421.8 293.5Z"/><path fill="#9ea29e" d="M1421.8 274.5L1431.5 276 1421.8 293.5Z"/>
</svg>
</template>

<script>
const pen = document.createElement('canvas').getContext('2d');
const ink = (text, size, weight = 400) => {
  pen.font = `${weight} ${size}px Roboto`;
  const m = pen.measureText(text);
  return { left: -m.actualBoundingBoxLeft, right: m.actualBoundingBoxRight };
};
const stretch = (text, size, weight, width) => {
  const m = ink(text, size, weight);
  return width / (m.right - m.left);
};

const define = (name, html, after) => customElements.define(name, class extends HTMLElement {
  connectedCallback() {
    if (this.shadowRoot) return;
    this.attachShadow({ mode: 'open' }).innerHTML = typeof html === 'function' ? html(this) : html;
    if (after) after(this);
  }
});

/* One line of text whose ink starts at [left] or ends at [right], stretched to [span] or by [k]. */
define('fit-line', el => {
  const a = (n, d) => el.hasAttribute(n) ? +el.getAttribute(n) : d;
  const size = a('size', 36), weight = a('weight', 400), lh = a('lh', 42);
  const m = ink(el.textContent, size, weight);
  const k = el.hasAttribute('span') ? a('span') / (m.right - m.left) : a('k', 1);
  const shift = el.hasAttribute('left') ? a('left') - m.left * k : a('right') - m.right * k;
  return `<style>:host{display:block;height:${lh}px;flex:none;width:0;white-space:nowrap}
  span{display:inline-block;font:${weight} ${size}px/${lh}px Roboto,sans-serif;margin-left:${shift}px;transform:scaleX(${k});transform-origin:0 0}</style><span><slot></slot></span>`;
});

define('wifi-icon', `<style>:host{display:block;width:42px;height:35px}svg{display:block}</style>
<svg width="42" height="35" viewBox="0 0 42 35"><path fill="#fff" d="M0 8.6C5.500 3 12.500 .2 21 .2S36.500 3 42 8.600L21 34.500Z"/></svg>`);
define('signal-icon', `<style>:host{display:block;width:36px;height:36px;flex:none}svg{display:block}</style>
<svg width="36" height="36" viewBox="0 0 36 36"><path fill="#fff" d="M0 36L36 0V36Z"/></svg>`);
define('battery-icon', `<style>:host{display:grid;width:23px;height:35px}svg,b{grid-area:1/1}
b{font:700 18px/34px Roboto,sans-serif;color:#fff;text-align:center;letter-spacing:-1px;padding-right:1px;transform:scaleX(.9)}</style>
<svg width="23" height="35" viewBox="0 0 23 35"><path fill="#ec807a" d="M6 0H17V4H23V27H0V4H6Z"/><path fill="#fff" d="M0 27H23V35H0Z"/></svg><b>22</b>`);
define('picture-icon', `<style>:host{display:block;width:14px;height:28px;overflow:hidden;margin-right:auto}svg{display:block}</style>
<svg width="14" height="28" viewBox="0 0 14 28"><path fill="none" stroke="#fff" stroke-opacity=".9" stroke-width="2" d="M-16 1H12.500V27H-16"/><path fill="#fff" d="M0 23V17.500L4 16 9 23Z"/></svg>`);

define('status-bar', `<style>:host{display:flex;height:54px;flex:none;background:#e43932;box-sizing:border-box;padding-top:8px;align-items:flex-start;justify-content:flex-end;overflow:hidden}
signal-icon{margin-left:9px}signal-icon+signal-icon{margin-left:17px}</style>
<slot></slot><wifi-icon></wifi-icon><signal-icon></signal-icon><signal-icon></signal-icon><slot name="end"></slot>`);

define('app-bar', `<style>:host{display:flex;align-items:center;height:133px;flex:none;background:#ee4431;color:#fff;box-sizing:border-box;padding-top:5px;position:relative;z-index:1;box-shadow:0 3px 16px rgba(60,20,20,.55);clip-path:inset(0 0 -30px 0)}</style><slot></slot>`);

define('nav-bar', `<style>:host{display:flex;align-items:center;flex:none;background:#000;box-sizing:border-box;overflow:hidden}
svg{flex:none;fill:none;stroke:#f0f0f0;stroke-width:4;stroke-linejoin:round}.c{margin:0 196px 0 var(--gap,196px)}</style>
<svg width="39" height="46" viewBox="0 0 39 46"><path d="M36.800 3V43L2.500 23Z"/></svg>
<svg class="c" width="46" height="46" viewBox="0 0 46 46"><circle cx="23" cy="23" r="20.500"/></svg>
<svg width="40" height="40" viewBox="0 0 40 40"><rect x="2" y="2" width="36" height="36" rx="1"/></svg>`);

define('phone-screen', `<style>:host{display:flex;flex-direction:column;flex:none;height:1522px;overflow:hidden}
main{flex:1;min-height:0;display:flex;flex-direction:column;overflow:hidden}</style>
<slot name="top"></slot><main><slot></slot></main><slot name="nav"></slot>`);

define('raised-button', `<style>:host{display:block;width:210px;height:115px;background:#5768ba;color:#0b0d16;box-shadow:0 3px 5px rgba(90,30,30,.45);box-sizing:border-box;padding-top:34px}</style><slot></slot>`);

const titleK = stretch('Blood Bank Facility', 47, 500, 404.5);
const detailK = stretch('Delhi Cantonment, Area Sadar', 39, 400, 537);
const listK = stretch('Poly Clinic Blood Bank', 35.5, 400, 351.5);
const headK = stretch('Name : Armed Forces Transfusion', 36, 400, 539);
const noteK = stretch('here is calculated with straight line, it may be different from', 24, 400, 633.4);

const paragraphs = [
  [['pital Name : Armed Forces Transfusi', 647, 'o'], ['tre', 38]],
  [['ress : Delhi Cantonment, Area Sadar', 639], ['ar, Army Public School', 387.300]],
  [['rict : null', 139.800]], [['il : aftcdelhicant@gmail.com', 512.300]], [['tact : 011 23336685', 349.600]],
  [['pline : null', 157]], [['site : null', 156]],
  [['ance : 29.831049Km', 358.800], ['om your last Location)', 382.300]]
];
define('details-view', () => `<style>:host{display:flex;flex-direction:column;flex:1;background:#f69994;color:#6e453f}
.h{margin-top:56px}.ps{display:flex;flex-direction:column;gap:40.4px;margin-top:72.500px}
.row{display:flex;gap:24px;padding-left:111px;margin-top:17.700px}.note{margin-top:28px}</style>
<fit-line class="h" size="58.600" weight="700" lh="70" left="83.500" span="501">Blood Bank Details</fit-line>
<div class="ps">${paragraphs.map(p => `<div>${p.map(([t, r, tail]) => {
  const extra = tail ? (ink(t + tail, 39).right - ink(t, 39).right) * detailK : 0;
  return `<fit-line size="39" lh="48" right="${r + extra}" k="${detailK}">${t}${tail || ''}</fit-line>`;
}).join('')}</div>`).join('')}</div>
<div class="row"><raised-button><fit-line size="29.500" weight="500" lh="48" left="22" span="166">SEE ON MAP</fit-line></raised-button><raised-button><fit-line size="29.500" weight="500" lh="48" left="61" span="89">SHARE</fit-line></raised-button></div>
<fit-line class="note" size="24" lh="28" right="${657.6 + (ink('from t', 24).right - ink('from', 24).right) * noteK}" k="${noteK}">ce here is calculated with straight line, it may be different from t</fit-line>`);

const banks = [['All India Institute of Medical Sciences (AIIMS)', 707], ['Apollo Hospital', 227.600], ['Armed Forces Transfusion Centre', 521.600], ['Batra Hospital and Medical Research Centre', 683.600], ['Bensups Hospital', 264.600], ['Bhagat Chandra Hospital', 381.600], ['Blood Bank Organisation', 378], ['Brahm Shakti Hospital and Research Centre', 678], ['Cardio Neuro Centre, AIIMS', 421.800], ['Central Poly Clinic Blood Bank', 463.500]];
define('results-view', () => `<style>:host{display:flex;flex-direction:column;flex:1;background:#fbcbcd;color:#6e5b56}
.h{margin-top:33px}.list{margin-top:4.900px}.item{height:84.850px;box-sizing:border-box;padding-top:13px;border-bottom:2px solid #d8adae}
.src{margin-top:auto;margin-bottom:2px;color:#7553b8}</style>
<fit-line class="h" size="59" weight="700" lh="70" left="255" span="197.400">Results</fit-line>
<div class="list">${banks.map(([t, r]) => `<div class="item"><fit-line size="35.500" lh="60" right="${r}" k="${listK}">${t}</fit-line></div>`).join('')}</div>
<fit-line class="src" size="35.500" lh="42" left="130.600" span="446">Data provided by data.gov.in</fit-line>`);

define('map-header', () => `<style>:host{display:block;height:142px;box-sizing:border-box;padding-top:4.700px;background:#fafafa;color:#757575;flex:none}.two{margin-top:51.800px}</style>
<fit-line size="36" right="636.600" k="${headK}">ospital Name : Armed Forces Transfusion</fit-line>
<fit-line class="two" size="36" right="${605.2 + (ink('8Km', 36).right - ink('8', 36).right) * headK}" k="${headK}">stance from Your Location : 29.831038Km</fit-line>`);

customElements.define('region-map', class extends HTMLElement {
  connectedCallback() {
    if (this.shadowRoot) return;
    this.attachShadow({ mode: 'open' }).append(document.getElementById('map-tpl').content.cloneNode(true));
  }
});

define('screen-collage', () => `<style>:host{display:flex;padding:7px;width:2034px;height:1522px}
.a{width:667px;margin-right:6px}.b{width:707px;margin-right:7px}.c{width:647px}
.a nav-bar{height:111px;padding:3px 0 0 74.500px}.b nav-bar{height:111px;padding:3px 0 0 95.500px}.c nav-bar{height:103px;padding:12px 0 0 128.500px;--gap:197.500px}
.a status-bar{padding-right:20px}
battery-icon{margin-left:27px}.tail{width:9.500px;height:4px;background:#fff;margin-top:-5px}
.clock{width:14px;margin:0 0 0 26px;color:#fff}.pic{margin-top:2px}.off{margin-right:-6px}
region-map{flex:1}</style>
<phone-screen class="a"><status-bar slot="top"><battery-icon slot="end"></battery-icon></status-bar><app-bar slot="top"><fit-line size="47" weight="500" lh="60" right="347.800" k="${titleK}">ood Bank Facility</fit-line></app-bar><details-view></details-view><nav-bar slot="nav"></nav-bar></phone-screen>
<phone-screen class="b"><status-bar slot="top"><battery-icon slot="end"></battery-icon><fit-line slot="end" class="clock" size="27" weight="500" lh="36" left="0" k=".95">1</fit-line></status-bar><app-bar slot="top"><div class="tail"></div><fit-line style="margin-left:-9.500px" size="47" weight="500" lh="60" left="98" k="${titleK}">Blood Bank Facility</fit-line></app-bar><results-view></results-view><nav-bar slot="nav"></nav-bar></phone-screen>
<phone-screen class="c"><status-bar slot="top"><picture-icon class="pic"></picture-icon><div slot="end" class="off"></div></status-bar><map-header></map-header><region-map></region-map><nav-bar slot="nav"></nav-bar></phone-screen>`);
</script>
</body>
</html>
